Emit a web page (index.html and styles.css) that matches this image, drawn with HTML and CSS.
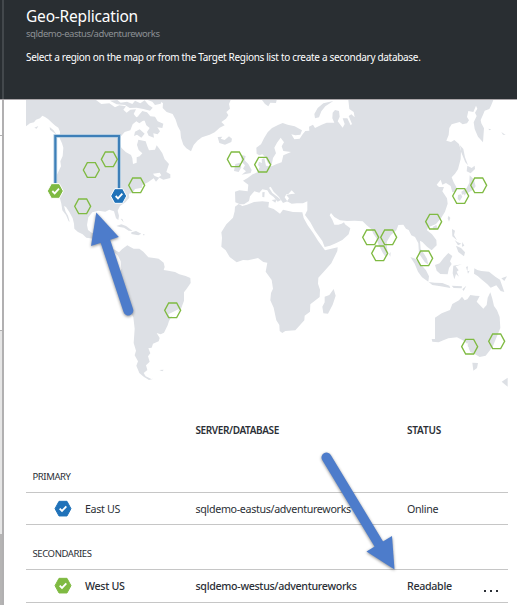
FILE: index.html
```html
<!DOCTYPE html>
<html lang="en">
<head>
<meta charset="utf-8">
<title>Geo-Replication</title>
<link rel="stylesheet" href="styles.css">
</head>
<body>
<div class="shell">
  <aside class="rail">
    <div class="rail-head"></div>
    <div class="rail-top"></div>
    <div class="rail-panel"></div>
    <div class="rail-list"></div>
    <div class="rail-end"></div>
  </aside>
  <main class="blade">
    <header class="head">
      <h1 class="title">Geo-Replication</h1>
      <p class="resource">sqldemo-eastus/adventureworks</p>
      <p class="hint">Select a region on the map or from the Target Regions list to create a secondary database.</p>
    </header>
    <svg class="map" viewBox="18 12 1446 873" aria-label="Region map">
      <defs>
        <path id="hex" d="M-24 0L-12-22H12L24 0L12 22H-12Z"/>
        <path id="tick" d="M-10 0L-3 7L10-7"/>
      </defs>
      <g class="land">
        <!-- North America -->
        <path d="M18 15V94L30 85L42 82L48 74L60 70L67 62L75 66L84 72L96 83L106 92L115 98L120 110L119 130L126 145L130 158L128 183L121 199L123 214L115 230L107 248L106 275L108 292L119 307L124 326L127 346L138 360L146 379L149 380L144 362L137 350L132 333L138 336L148 351L158 370L162 386L163 401L174 411L188 418L199 428L220 431L240 444L255 450L266 450L262 438L249 430L246 414L230 416L215 413L204 405L201 390L205 367L217 352L235 347L256 350L268 344L282 349L288 370L295 375L297 362L293 347L300 333L316 322L328 308L327 296L338 293L345 282L366 278L367 270L384 262L401 250L408 260L418 248L404 243L399 236L419 233L424 241L416 247L430 254L451 249L451 238L439 231L447 207L434 193L427 175L418 161L410 151L405 164L387 166L382 154L377 139L355 134L351 150L356 165L367 175L359 184L350 187L350 203L339 207L337 190L333 180L317 171L304 158L299 143L303 124L314 111L331 106L338 88L349 79L358 85L371 76L361 61L349 67L341 57L348 43L331 44L320 53L310 44L318 34L298 31L285 37L268 25L244 27L228 15Z"/>
        <path d="M355 62L367 48L381 52L391 64L405 65L413 79L430 86L427 99L412 97L420 109L413 118L400 115L402 128L386 122L381 111L389 99L379 91L374 77L359 76ZM292 15L302 23L321 20L337 27L345 17L361 25L374 16L386 30L398 38L390 47L370 42L350 38L329 39L315 30L290 28L270 17ZM383 15L397 20L405 30L422 26L427 15ZM359 103L374 116L364 128L351 119L342 123L345 110Z"/>
        <path d="M418 15L429 25L428 39L440 51L458 57L467 74L473 93L481 108L483 128L490 149L499 160L513 169L521 150L532 137L546 127L569 119L584 112L599 98L614 91L604 81L618 71L625 61L619 51L630 41L627 27L632 15Z"/>
        <path d="M593 126L607 125L602 131L614 135L627 124L636 131L634 141L615 149L598 144ZM726 15L735 27L745 34L751 23L768 24L770 15Z"/>
        <path d="M289 393L304 388L318 393L338 408L326 407L312 398L299 396ZM334 412L348 408L364 416L355 421L334 417ZM369 417L376 420L369 421ZM302 371L311 382L307 372ZM89 96L100 105L110 119L103 114L90 104ZM43 98L55 93L50 101Z"/>
        <!-- South America -->
        <path d="M280 462L297 472L306 463L322 451L331 456L341 461L358 461L370 470L385 487L402 489L416 491L431 503L434 516L431 525L445 527L465 531L478 538L497 543L511 549L512 564L499 583L492 592L492 617L484 639L473 651L456 662L447 678L443 691L432 713L422 718L410 714L419 729L416 739L399 746L395 758L385 760L391 775L384 784L389 800L378 811L382 825L371 834L377 844L394 852L401 851L387 855L371 845L358 834L349 812L354 799L344 781L348 767L341 744L344 701L340 667L333 653L317 639L298 605L290 583L286 565L290 555L297 541L304 521L302 499L294 482L281 470ZM418 825L431 824L427 829Z"/>
        <g transform="translate(480)">
          <!-- Eurasia -->
          <path d="M230 176L229 158L243 148L252 130L263 112L276 99L294 90L308 84L323 89L344 94L366 106L361 119L346 121L334 118L343 133L359 131L368 118L376 108L388 107L387 95L399 89L405 99L425 89L440 83L463 83L457 70L458 53L465 45L477 48L479 65L473 79L488 98L494 87L488 70L502 70L512 91L516 87L506 63L514 58L524 67L521 51L508 42L505 15H940L933 32L928 42L914 47L910 57L902 75L904 85L912 100L909 142L894 125L884 102L881 82L890 63L885 53L892 41L888 32L880 51L865 48L861 66L867 76L861 85L848 88L839 81L815 88L808 99L806 120L799 137L813 141L823 135L837 147L843 168L842 192L834 223L825 236L815 247L821 262L829 276L829 289L817 292L812 273L798 264L787 269L782 254L770 269L777 276L792 276L787 289L801 310L803 326L795 350L783 370L768 387L754 393L744 397L741 406L756 418L769 435L770 451L755 466L741 455L727 441L720 437L722 462L732 476L741 491L745 509L734 501L717 476L715 445L705 426L694 421L686 405L678 401L670 389L655 390L649 406L632 421L620 441L622 467L624 479L617 486L609 475L596 450L589 430L580 416L574 402L560 391L548 379L524 377L501 378L480 376L463 366L453 354L449 361L457 374L463 389L475 389L485 386L492 382L495 388L511 400L506 418L487 435L469 444L450 452L434 456L427 438L405 407L391 382L375 360L382 346L382 319L369 325L351 325L335 326L321 319L327 310L319 300L334 297L345 296L335 286L325 297L319 298L314 307L322 319L309 324L297 306L281 290L272 275L267 278L277 294L293 306L303 315L293 320L281 306L269 297L262 286L247 283L238 293L223 289L210 304L207 318L192 328L180 328L166 322L165 290L178 286L203 289L205 269L189 257L203 249L218 238L232 232L239 216L246 207L245 193L253 189L258 212L275 214L290 207L305 202L310 181L333 171L310 168L305 154L312 142L302 128L291 143L283 158L288 175L279 189L275 209L264 205L256 187L247 178L238 181Z"/>
          <path d="M405 70L403 57L413 39L430 25L460 18L436 34L424 49L417 67ZM182 179L197 183L194 196L205 207L215 225L212 234L185 239L198 229L189 221L195 211L186 202ZM166 207L180 203L184 217L176 231L162 228ZM247 292L254 291L253 307L247 306ZM275 315L290 313L286 323ZM237 200L247 205L242 218L234 210Z"/>
          <!-- Africa -->
          <path d="M165 335L176 327L187 333L201 329L222 321L247 319L267 321L265 337L281 342L300 356L309 344L339 351L367 352L371 369L383 391L399 413L414 437L424 451L435 466L473 457L472 468L454 505L430 532L415 548L414 566L420 584L419 606L391 628L390 650L374 662L373 676L346 706L316 708L307 714L299 708L298 690L289 676L281 638L271 616L273 594L279 581L275 555L257 530L262 503L250 501L234 489L204 496L189 495L170 502L149 486L137 466L124 455L126 428L124 412L139 388L159 368L164 349Z"/>
          <path d="M461 582L467 602L458 629L444 656L430 655L427 635L434 622L434 605L448 600Z"/>
        </g>
        <g transform="translate(981)">
          <!-- East Asia -->
          <path d="M339 151L349 162L354 187L363 211L355 202L342 170ZM361 212L374 219L383 212L384 222L371 235L359 229ZM368 241L380 253L386 274L377 285L366 292L345 299L343 290L359 279L367 263ZM333 300L342 298L346 305L338 318L332 311ZM348 291L359 292L353 302ZM305 362L310 369L306 380L302 370ZM257 396L268 390L271 399L260 404ZM315 402L324 407L321 420L330 436L316 424ZM323 435L332 442L343 446L333 451ZM131 471L126 478L130 485ZM424 101L433 103L427 106ZM463 111L476 120L468 119Z"/>
          <!-- Maritime Southeast Asia -->
          <path d="M190 486L205 491L223 510L237 526L246 544L244 560L225 547L213 530L203 506ZM245 561L263 563L286 564L307 572L310 579L281 574L256 570ZM264 510L278 505L290 489L304 474L316 483L309 499L314 507L306 519L302 538L280 537L269 527ZM319 512L345 508L326 514L335 526L329 530L336 545L327 537L322 553L317 535ZM327 452L342 459L354 472L351 484L334 471ZM346 441L352 452L345 455ZM357 516L363 514L361 529L368 527L363 536ZM314 572L345 574L344 580L320 579ZM346 583L358 572L350 588ZM382 520L391 525L403 528L426 530L445 545L459 554L472 591L461 588L448 571L431 578L421 568L403 553L392 543L381 536ZM463 550L480 544L472 558Z"/>
          <!-- Australia and New Zealand -->
          <path d="M264 668L284 655L309 645L316 627L336 616L345 605L353 616L361 613L370 600L385 602L398 603L389 620L409 641L419 630L422 608L430 592L436 611L441 633L450 646L458 666L460 699L448 728L437 755L416 782L398 786L383 777L370 771L359 745L346 735L330 727L304 730L289 736L275 742L256 740L254 732L264 732ZM376 803L393 804L390 819L379 827ZM464 860L482 848V875Z"/>
        </g>
      </g>
      <g class="water">
        <path d="M342 747L350 738L355 752L365 742L358 758L366 757L357 767Z" transform="translate(981)"/>
        <path d="M450 666L445 658L471 645L478 641L471 654Z"/>
      </g>
      <path class="link-halo" d="M106 265V123H297V285"/>
      <path class="link" d="M106 265V123H297V285"/>
      <g class="region">
        <use href="#hex" x="214" y="225"/>
        <use href="#hex" x="268" y="193"/>
        <use href="#hex" x="350" y="271"/>
        <use href="#hex" x="188" y="334"/>
        <use href="#hex" x="458" y="646"/>
        <use href="#hex" x="646" y="193"/>
        <use href="#hex" x="728" y="209"/>
        <use href="#hex" x="1376" y="271"/>
        <use href="#hex" x="1322" y="303"/>
        <use href="#hex" x="1241" y="380"/>
        <use href="#hex" x="1052" y="427"/>
        <use href="#hex" x="1106" y="427"/>
        <use href="#hex" x="1079" y="475"/>
        <use href="#hex" x="1214" y="490"/>
        <use href="#hex" x="1349" y="755"/>
        <use href="#hex" x="1430" y="739"/>
      </g>
      <use href="#hex" class="pin secondary" x="106" y="288"/>
      <use href="#hex" class="pin primary" x="296" y="303"/>
      <use href="#tick" class="tick" x="107" y="288"/>
      <use href="#tick" class="tick" x="297" y="303"/>
    </svg>
    <section class="links">
      <div class="row columns"><span class="db">SERVER/DATABASE</span><span class="state">STATUS</span></div>
      <h2 class="group">PRIMARY</h2>
      <div class="row item">
        <svg class="badge" viewBox="-27 -26 54 52"><use href="#hex" class="primary solid"/><use href="#tick" class="tick"/></svg>
        <span class="name">East US</span><span class="db">sqldemo-eastus/adventureworks</span><span class="state">Online</span>
      </div>
      <h2 class="group second">SECONDARIES</h2>
      <div class="row item strong">
        <svg class="badge" viewBox="-27 -26 54 52"><use href="#hex" class="secondary solid"/><use href="#tick" class="tick"/></svg>
        <span class="name">West US</span><span class="db">sqldemo-westus/adventureworks</span><span class="state">Readable</span>
        <span class="more"><i></i><i></i><i></i></span>
      </div>
    </section>
  </main>
</div>
<svg class="arrows" viewBox="0 0 517 605" aria-hidden="true">
  <g class="arrow">
    <path class="shaft" d="M128.3 310.5L105 240"/>
    <path d="M96.3 212.5L118.8 237L91 246Z"/>
  </g>
  <g class="arrow">
    <path class="shaft" d="M326.5 457.5L380 546"/>
    <path d="M394.5 569.5L392 536L366.5 551.5Z"/>
  </g>
</svg>
</body>
</html>
```
FILE: styles.css
```css
* { box-sizing: border-box; }
body {
  margin: 0;
  width: 517px;
  height: 605px;
  overflow: hidden;
  position: relative;
  background: #fff;
  color: #2b2f36;
  font-family: "Noto Sans", "Open Sans", sans-serif;
}
.shell { display: flex; height: 605px; }

.rail {
  width: 4px;
  flex: none;
  display: flex;
  flex-direction: column;
  border-right: 2px solid #b1b0b1;
}
.rail-head {
  height: 100px;
  width: 4px;
  background: linear-gradient(90deg, #292e32 2px, #43484c 2px);
  border-bottom: 1px solid #aaa6a9;
}
.rail-top { height: 36px; border-bottom: 1px solid #b1b0b1; }
.rail-panel { height: 195px; border-bottom: 1px solid #b1b0b1; }
.rail-list { height: 203px; background: #e6e6e6; }
.rail-end { flex: 1; background: #b5b4b4; }

.blade { flex: 1; display: flex; flex-direction: column; }
.head {
  height: 100px;
  flex: none;
  padding: 5px 0 0 22px;
  background: #292e32;
  border-bottom: 1px solid #aaa6a9;
}
h1, h2, p { margin: 0; font-weight: 400; white-space: nowrap; }
.title { color: #fff; font-size: 15.5px; line-height: 22px; letter-spacing: -0.2px; }
.resource { color: #8c9094; font-size: 9.5px; line-height: 13px; letter-spacing: -0.45px; }
.hint { margin-top: 10px; color: #fff; font-size: 10px; line-height: 15px; letter-spacing: -0.31px; }

.map { width: 482px; height: 291px; margin: -1px 0 0 22px; flex: none; }
.land { fill: #dde0e5; }
.water { fill: #fff; }
.link-halo { fill: none; stroke: #a9c8e0; stroke-width: 11; }
.link { fill: none; stroke: #3d7fb8; stroke-width: 6; }
.region { fill: none; stroke: #7fba42; stroke-width: 4; }
.pin { stroke: #fff; stroke-width: 3; }
.primary { fill: #2072b9; }
.secondary { fill: #7fba42; }
.primary.solid { stroke: #2072b9; stroke-width: 3; }
.secondary.solid { stroke: #7fba42; stroke-width: 3; }
.tick { fill: none; stroke: #fff; stroke-width: 5.5; }

.links { width: 482px; margin-left: 22px; padding-top: 28px; }
.row {
  display: grid;
  grid-template-columns: 59px 110.5px 211.5px 1fr 24px;
  align-items: center;
  white-space: nowrap;
}
.db { grid-column: 3; }
.state { grid-column: 4; }
.columns { height: 24px; font-size: 10px; font-weight: 600; letter-spacing: -0.38px; }
.columns .state { letter-spacing: -0.2px; }
.group { height: 50px; padding: 27px 0 0 6.5px; font-size: 9.5px; line-height: 16px; letter-spacing: -0.4px; }
.group.second { height: 44px; padding-top: 21px; }
.item {
  height: 33px;
  border: solid #c6c6c6;
  border-width: 1px 0;
  font-size: 10.7px;
  letter-spacing: -0.33px;
}
.badge { width: 18px; height: 17.3px; margin-left: 27.5px; }
.strong { height: 34px; font-weight: 500; padding-bottom: 1px; }
.more { display: flex; gap: 4px; padding: 10px 0 0; }
.more i { width: 2px; height: 2px; background: #2b2f36; }

.arrows { position: absolute; left: 0; top: 0; width: 517px; height: 605px; pointer-events: none; }
.arrow { fill: #4d7ccb; filter: drop-shadow(0 1.5px 1.5px rgba(0, 0, 0, 0.45)); }
.shaft { stroke: #4d7ccb; stroke-width: 10; stroke-linecap: round; }
```
